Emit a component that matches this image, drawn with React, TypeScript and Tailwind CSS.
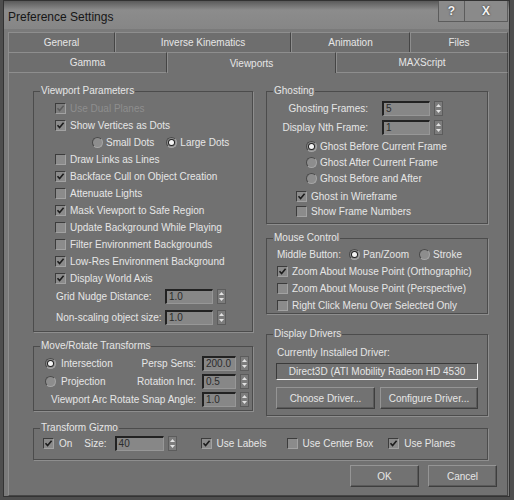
import type { ReactNode } from 'react';

function Check({ on, dim }: { on?: boolean; dim?: boolean }) {
  return (
    <span
      className={`flex h-[11px] w-[11px] shrink-0 items-center justify-center border border-[#3c3c3c] border-b-[#a2a2a2] border-r-[#a2a2a2] ${
        dim ? 'bg-[#7d7d7d]' : 'bg-[#8b8b8b]'
      }`}
    >
      {on && (
        <svg width="9" height="9" viewBox="0 0 9 9">
          <path d="M1.5 4.2 L3.6 6.5 L7.6 1.8" fill="none" stroke={dim ? '#5c5c5c' : '#1c1c1c'} strokeWidth="1.6" />
        </svg>
      )}
    </span>
  );
}

function CheckRow({ label, on, dim, className = '' }: { label: string; on?: boolean; dim?: boolean; className?: string }) {
  return (
    <div className={`flex items-center gap-[4px] ${className}`}>
      <Check on={on} dim={dim} />
      <span className={dim ? 'text-[#8e8e8e]' : ''}>{label}</span>
    </div>
  );
}

function Radio({ on }: { on?: boolean }) {
  return (
    <span className="flex h-[11px] w-[11px] shrink-0 items-center justify-center rounded-full border border-[#4a4a4a] border-b-[#a5a5a5] border-r-[#a5a5a5] bg-[#8d8d8d]">
      {on && <span className="h-[5px] w-[5px] rounded-full bg-[#f4f4f4] ring-1 ring-[#222]" />}
    </span>
  );
}

function Arrows() {
  return (
    <span className="ml-[4px] flex h-[15px] w-[9px] shrink-0 flex-col items-center justify-center gap-[3px] border border-[#5c5c5c] bg-[#7c7c7c]">
      <svg width="5" height="3" viewBox="0 0 5 3">
        <path d="M0 3 L2.5 0 L5 3Z" fill="#e2e2e2" />
      </svg>
      <svg width="5" height="3" viewBox="0 0 5 3">
        <path d="M0 0 L2.5 3 L5 0Z" fill="#e2e2e2" />
      </svg>
    </span>
  );
}

function Spin({ value, field }: { value: string; field: string }) {
  return (
    <div className="flex shrink-0 items-center">
      <span
        className={`flex h-[15px] items-center border-b border-l-2 border-r border-t-2 border-[#222] border-b-[#979797] border-r-[#979797] bg-[#878787] pl-[2px] leading-none text-[#2c2c2c] ${field}`}
      >
        {value}
      </span>
      <Arrows />
    </div>
  );
}

function Group({ title, className = '', children }: { title: string; className?: string; children: ReactNode }) {
  return (
    <fieldset className={`min-w-0 border border-[#4c4c4c] shadow-[1px_1px_0_#8e8e8e] ${className}`}>
      <legend className="ml-[6px] px-[1px] leading-[12px]">{title}</legend>
      {children}
    </fieldset>
  );
}

function Button({ label, className = '' }: { label: string; className?: string }) {
  return (
    <div
      className={`flex h-[22px] items-center justify-center border border-[#959595] border-b-[#3e3e3e] border-r-[#3e3e3e] bg-[#727272] shadow-[inset_-1px_-1px_0_#5a5a5a] ${className}`}
    >
      {label}
    </div>
  );
}

const tab = 'flex items-center justify-center border-l border-r border-t border-l-[#8e8e8e] border-r-[#454545] border-t-[#8e8e8e]';

export default function App() {
  return (
    <div className="h-[500px] w-[514px] overflow-hidden bg-[#4e4e4e] font-['Liberation_Sans',Arial,sans-serif] text-[10px] text-[#e6e6e6]">
      <div className="ml-[3px] flex h-[497px] w-[507px] flex-col border border-[#333] bg-[#7a7a7a]">
        {/* title bar */}
        <div className="flex h-[28px] shrink-0 items-start justify-between bg-[linear-gradient(180deg,#5a5a5a_0px,#8c8c8c_9px,#868686_28px)]">
          <span className="pl-[4px] pt-[9px] text-[12px] leading-[14px] text-[#161616]">Preference Settings</span>
          <div className="mr-[1px] flex">
            <div className="flex h-[21px] w-[27px] items-center justify-center border border-[#5c5c5c] border-t-0 bg-[#8a8a8a] text-[12px] font-bold text-[#f2f2f2] [text-shadow:0_0_2px_#222]">
              ?
            </div>
            <div className="flex h-[21px] w-[43px] items-center justify-center border border-l-0 border-[#5c5c5c] border-t-0 bg-[#8a8a8a] text-[12px] font-bold text-[#f2f2f2] [text-shadow:0_0_2px_#222]">
              X
            </div>
          </div>
        </div>

        {/* tab control */}
        <div className="ml-[4px] mr-[1px] mt-[1px] flex flex-1 flex-col">
          <div className="mt-[2px] flex h-[20px]">
            <div className={`${tab} w-[107px] bg-[#6e6e6e]`}>General</div>
            <div className={`${tab} w-[176px] bg-[#6e6e6e]`}>Inverse Kinematics</div>
            <div className={`${tab} w-[119px] bg-[#6e6e6e]`}>Animation</div>
            <div className={`${tab} w-[98px] bg-[#6e6e6e]`}>Files</div>
          </div>
          <div className="flex h-[21px]">
            <div className={`${tab} w-[159px] border-b border-b-[#8e8e8e] bg-[#6e6e6e]`}>Gamma</div>
            <div className={`${tab} w-[169px] bg-[#717171]`}>Viewports</div>
            <div className={`${tab} w-[172px] border-b border-b-[#8e8e8e] bg-[#6e6e6e]`}>MAXScript</div>
          </div>

          <div className="flex flex-1 flex-col border-b border-l border-r border-b-[#454545] border-l-[#8e8e8e] border-r-[#454545] bg-[#717171] pl-[24px] pt-[12px]">
            <div className="flex h-[331px] gap-[13px]">
              {/* left column */}
              <div className="flex w-[220px] flex-col">
                <Group title="Viewport Parameters" className="h-[247px]">
                  <div className="flex flex-col pl-[21px] pt-[3px]">
                    <CheckRow className="h-[17px]" label="Use Dual Planes" on dim />
                    <CheckRow className="h-[17px]" label="Show Vertices as Dots" on />
                    <div className="ml-[37px] flex h-[17px] items-center">
                      <Radio />
                      <span className="ml-[3px]">Small Dots</span>
                      <span className="ml-[12px]">
                        <Radio on />
                      </span>
                      <span className="ml-[3px]">Large Dots</span>
                    </div>
                    <CheckRow className="h-[17px]" label="Draw Links as Lines" />
                    <CheckRow className="h-[17px]" label="Backface Cull on Object Creation" on />
                    <CheckRow className="h-[17px]" label="Attenuate Lights" />
                    <CheckRow className="h-[17px]" label="Mask Viewport to Safe Region" on />
                    <CheckRow className="h-[17px]" label="Update Background While Playing" />
                    <CheckRow className="h-[17px]" label="Filter Environment Backgrounds" />
                    <CheckRow className="h-[17px]" label="Low-Res Environment Background" on />
                    <CheckRow className="h-[17px]" label="Display World Axis" on />
                    <div className="flex h-[19px] items-center">
                      <span className="ml-[1px] w-[109px]">Grid Nudge Distance:</span>
                      <Spin value="1.0" field="w-[48px]" />
                    </div>
                    <div className="mt-[2px] flex h-[19px] items-center">
                      <span className="ml-[1px] w-[109px]">Non-scaling object size:</span>
                      <Spin value="1.0" field="w-[48px]" />
                    </div>
                  </div>
                </Group>

                <Group title="Move/Rotate Transforms" className="mt-[8px] h-[71px]">
                  <div className="flex flex-col pl-[11px] pr-[3px] pt-[2px]">
                    <div className="flex h-[18px] items-center">
                      <div className="flex flex-1 items-center gap-[5px]">
                        <Radio on />
                        <span>Intersection</span>
                      </div>
                      <span className="mr-[6px]">Persp Sens:</span>
                      <Spin value="200.0" field="w-[34px]" />
                    </div>
                    <div className="flex h-[18px] items-center">
                      <div className="flex flex-1 items-center gap-[5px]">
                        <Radio />
                        <span>Projection</span>
                      </div>
                      <span className="mr-[6px]">Rotation Incr.</span>
                      <Spin value="0.5" field="w-[34px]" />
                    </div>
                    <div className="flex h-[19px] items-center">
                      <span className="flex-1 pr-[6px] text-right">Viewport Arc Rotate Snap Angle:</span>
                      <Spin value="1.0" field="w-[34px]" />
                    </div>
                  </div>
                </Group>
              </div>

              {/* right column */}
              <div className="flex w-[222px] flex-col">
                <Group title="Ghosting" className="h-[139px]">
                  <div className="flex flex-col pt-[2px]">
                    <div className="flex h-[19px] items-center">
                      <span className="w-[101px] text-right">Ghosting Frames:</span>
                      <span className="ml-[14px]">
                        <Spin value="5" field="w-[48px]" />
                      </span>
                    </div>
                    <div className="flex h-[19px] items-center">
                      <span className="w-[101px] text-right">Display Nth Frame:</span>
                      <span className="ml-[14px]">
                        <Spin value="1" field="w-[48px]" />
                      </span>
                    </div>
                    <div className="mt-[1px] flex flex-col pl-[39px]">
                      <div className="flex h-[16px] items-center gap-[3px]">
                        <Radio on />
                        <span>Ghost Before Current Frame</span>
                      </div>
                      <div className="flex h-[16px] items-center gap-[3px]">
                        <Radio />
                        <span>Ghost After Current Frame</span>
                      </div>
                      <div className="flex h-[16px] items-center gap-[3px]">
                        <Radio />
                        <span>Ghost Before and After</span>
                      </div>
                    </div>
                    <div className="mt-[3px] flex flex-col pl-[29px]">
                      <CheckRow className="h-[15px]" label="Ghost in Wireframe" on />
                      <CheckRow className="h-[15px]" label="Show Frame Numbers" />
                    </div>
                  </div>
                </Group>

                <Group title="Mouse Control" className="mt-[8px] h-[82px]">
                  <div className="flex flex-col pl-[10px] pt-[2px]">
                    <div className="flex h-[17px] items-center">
                      <span>Middle Button:</span>
                      <span className="ml-[8px]">
                        <Radio on />
                      </span>
                      <span className="ml-[3px]">Pan/Zoom</span>
                      <span className="ml-[10px]">
                        <Radio />
                      </span>
                      <span className="ml-[3px]">Stroke</span>
                    </div>
                    <CheckRow className="h-[17px]" label="Zoom About Mouse Point (Orthographic)" on />
                    <CheckRow className="h-[17px]" label="Zoom About Mouse Point (Perspective)" />
                    <CheckRow className="h-[17px]" label="Right Click Menu Over Selected Only" />
                  </div>
                </Group>

                <Group title="Display Drivers" className="mt-[14px] h-[88px]">
                  <div className="flex flex-col pl-[9px] pt-[6px]">
                    <span className="ml-[1px] h-[14px] leading-[14px]">Currently Installed Driver:</span>
                    <div className="mt-[3px] flex h-[17px] w-[202px] items-center justify-center border border-[#3a3a3a] border-b-[#f0f0f0] border-r-[#f0f0f0] bg-[#717171]">
                      Direct3D (ATI Mobility Radeon HD 4530
                    </div>
                    <div className="mt-[7px] flex gap-[5px]">
                      <Button label="Choose Driver..." className="w-[99px]" />
                      <Button label="Configure Driver..." className="w-[98px]" />
                    </div>
                  </div>
                </Group>
              </div>
            </div>

            <Group title="Transform Gizmo" className="mt-[6px] h-[38px] w-[455px]">
              <div className="flex h-[16px] items-center pl-[9px] pt-[3px]">
                <CheckRow label="On" on className="gap-[5px]" />
                <span className="ml-[12px]">Size:</span>
                <span className="ml-[8px]">
                  <Spin value="40" field="w-[49px]" />
                </span>
                <CheckRow label="Use Labels" on className="ml-[24px] gap-[5px]" />
                <CheckRow label="Use Center Box" className="ml-[20px] gap-[5px]" />
                <CheckRow label="Use Planes" on className="ml-[15px] gap-[5px]" />
              </div>
            </Group>

            <div className="mt-[5px] flex w-[464px] justify-end gap-[9px]">
              <Button label="OK" className="w-[69px]" />
              <Button label="Cancel" className="w-[69px]" />
            </div>
          </div>
        </div>
      </div>
    </div>
  );
}
